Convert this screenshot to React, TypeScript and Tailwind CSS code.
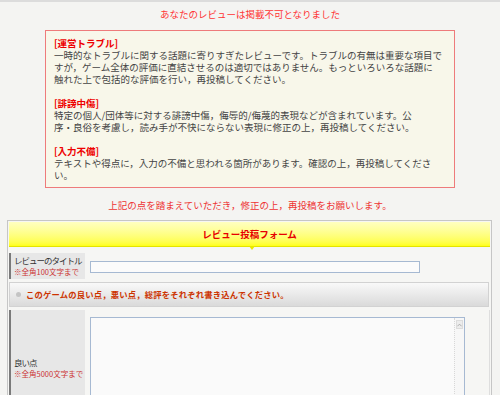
import React from "react";

const blocks = [
  {
    title: "[運営トラブル]",
    lines: [
      "一時的なトラブルに関する話題に寄りすぎたレビューです。トラブルの有無は重要な項目で",
      "すが，ゲーム全体の評価に直結させるのは適切ではありません。もっといろいろな話題に",
      "触れた上で包括的な評価を行い，再投稿してください。",
    ],
  },
  {
    title: "[誹謗中傷]",
    lines: [
      "特定の個人/団体等に対する誹謗中傷，侮辱的/侮蔑的表現などが含まれています。公",
      "序・良俗を考慮し，読み手が不快にならない表現に修正の上，再投稿してください。",
    ],
  },
  {
    title: "[入力不備]",
    lines: [
      "テキストや得点に，入力の不備と思われる箇所があります。確認の上，再投稿してくださ",
      "い。",
    ],
  },
];

function LabelCell({ label, note, tall }: { label: string; note: string; tall?: boolean }) {
  return (
    <div
      className={`w-[76px] shrink-0 bg-[#e7e7e7] border-l-2 border-[#7a7a7a] pl-[3px] flex flex-col justify-center ${
        tall ? "h-[116px]" : "h-[26px]"
      }`}
    >
      <div className="text-[8.5px] leading-[11px] tracking-[-1px] text-[#333] whitespace-nowrap">{label}</div>
      <div className="text-[7.5px] leading-[11px] text-[#cc3333] whitespace-nowrap">{note}</div>
    </div>
  );
}

export default function App() {
  return (
    <div
      className="min-h-[395px] bg-[#f4f4f2] border-t-2 border-[#dcdcdc] overflow-hidden"
      style={{ fontFamily: '"Noto Sans CJK JP", "Noto Sans", sans-serif' }}
    >
      <p className="pt-[6px] text-center text-[9.5px] leading-[12px] text-[#ff3333]">
        あなたのレビューは掲載不可となりました
      </p>

      <div className="ml-[45px] w-[410px] mt-[10px] border border-[#ee7b7b] bg-[#f8f7ea] px-[8px] py-[6px]">
        {blocks.map((b, i) => (
          <div key={b.title} className={i > 0 ? "mt-[12px]" : ""}>
            <div className="text-[9.5px] leading-[12px] font-bold text-[#ee0000]">{b.title}</div>
            {b.lines.map((l) => (
              <div key={l} className="text-[9.5px] leading-[12px] text-[#444] whitespace-nowrap">
                {l}
              </div>
            ))}
          </div>
        ))}
      </div>

      <p className="mt-[11px] text-center text-[9.5px] leading-[12px] text-[#ee3333]">
        上記の点を踏まえていただき，修正の上，再投稿をお願いします。
      </p>

      <div className="ml-[7px] w-[485px] mt-[9px] border border-[#c6c6c6] bg-[#f6f6f4] p-[1px] pb-0">
        <div className="relative h-[25px] bg-gradient-to-b from-[#ffffc0] to-[#ffff10] border-b border-[#e4e400] flex items-center justify-center">
          <span className="text-[9.5px] font-bold text-[#e60000]">レビュー投稿フォーム</span>
          <span className="absolute left-[240px] -bottom-[4px] w-0 h-0 border-l-[3px] border-r-[3px] border-t-[4px] border-l-transparent border-r-transparent border-t-[#e8e800]" />
        </div>

        <div className="mt-[6px] flex items-start">
          <LabelCell label="レビューのタイトル" note="※全角100文字まで" />
          <div className="ml-[5px] mt-[8px] w-[330px] h-[12px] border border-[#a6b9d2] bg-[#fbfbfb]" />
        </div>

        <div className="mt-[3px] mr-[1px] h-[25px] bg-gradient-to-b from-[#f9f9f9] to-[#dadada] border border-[#d2d2d2] flex items-center pl-[6px]">
          <span className="w-[5px] h-[5px] rounded-full bg-[#c4c4c4]" />
          <span className="ml-[5px] text-[8.3px] font-bold tracking-[0.2px] text-[#cc3300] whitespace-nowrap">
            このゲームの良い点，悪い点，総評をそれぞれ書き込んでください。
          </span>
        </div>

        <div className="mt-[3px] flex items-start">
          <LabelCell label="良い点" note="※全角5000文字まで" tall />
          <div className="ml-[5px] mt-[7px] w-[375px] h-[110px] border border-[#a6b9d2] bg-[#fafafa] flex justify-end">
            <div className="w-[10px] h-full border-l border-dotted border-[#d8d8d8] bg-[#f7f7f7] flex flex-col">
              <div className="h-[9px] mt-[2px] mx-[1px] bg-[#ececec] border border-[#dcdcdc] flex items-center justify-center">
                <svg width="6" height="4" viewBox="0 0 6 4">
                  <path d="M0.5 3.5 L3 1 L5.5 3.5" fill="none" stroke="#a0a0a0" strokeWidth="1" />
                </svg>
              </div>
            </div>
          </div>
          <div className="ml-auto w-px h-[116px] bg-[#dedede]" />
        </div>
      </div>
    </div>
  );
}
